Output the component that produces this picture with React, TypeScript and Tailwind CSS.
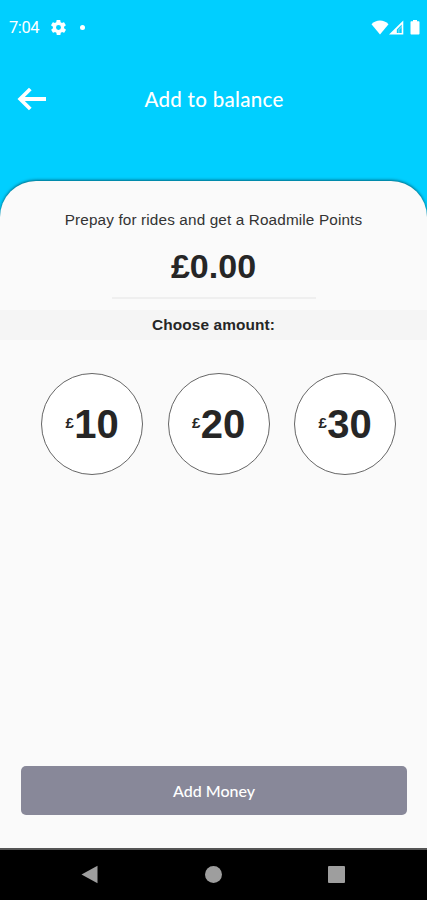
import React, { useState } from 'react';

const amounts = [10, 20, 30];

const StatusBar: React.FC = () => (
  <div className="flex h-[54px] items-center justify-between pl-[9px] pr-[7px] text-white">
    <div className="flex items-center">
      <span className="w-[42px] pt-[2px] font-[Roboto,sans-serif] text-[16.5px] leading-none tracking-[-0.4px]">7:04</span>
      <svg className="h-[15px] w-[15px]" viewBox="2 2 20 20" fill="currentColor">
        <path
          fillRule="evenodd"
          d="M19.4 13a7.5 7.5 0 0 0 0-2l2.1-1.6a.5.5 0 0 0 .1-.7l-2-3.4a.5.5 0 0 0-.6-.2l-2.5 1a7.3 7.3 0 0 0-1.7-1l-.4-2.7a.5.5 0 0 0-.5-.4h-4a.5.5 0 0 0-.5.4l-.4 2.7a7.3 7.3 0 0 0-1.7 1l-2.5-1a.5.5 0 0 0-.6.2l-2 3.4a.5.5 0 0 0 .1.7L4.6 11a7.5 7.5 0 0 0 0 2l-2.1 1.6a.5.5 0 0 0-.1.7l2 3.4c.1.2.4.3.6.2l2.5-1c.5.4 1.1.7 1.7 1l.4 2.7c0 .2.2.4.5.4h4c.2 0 .5-.2.5-.4l.4-2.7c.6-.3 1.2-.6 1.7-1l2.5 1c.2.1.5 0 .6-.2l2-3.4a.5.5 0 0 0-.1-.7zM12 15.300a3.300 3.300 0 1 1 0-6.600 3.300 3.300 0 0 1 0 6.600z"
        />
      </svg>
      <span className="ml-[14px] h-[5px] w-[5px] rounded-full bg-white" />
    </div>
    <div className="flex items-center">
      <svg className="h-[15px] w-[18px]" viewBox="0 0 18 15" fill="currentColor">
        <path d="M.5 4.200C5-.6 13-.6 17.500 4.200L9 14.500z" />
      </svg>
      <svg className="h-[15px] w-[15px]" viewBox="0 0 15 15" fill="currentColor">
        <path fillRule="evenodd" d="M14.300.5v14H0zM12.700 4.600L7.800 9.400v3.500h4.900z" />
        <path d="M9 9.500l3.700-4v2L10.500 10v3H9z" opacity="0.3" />
      </svg>
      <svg className="ml-[6px] h-[15px] w-[10px]" viewBox="0 0 10 15" fill="currentColor">
        <path d="M3 0h4v1.200h1.500c.6 0 1 .4 1 1v11.300c0 .6-.4 1-1 1h-7c-.6 0-1-.4-1-1V2.200c0-.6.4-1 1-1H3z" />
      </svg>
    </div>
  </div>
);

const NavigationBar: React.FC = () => (
  <div className="flex h-[52px] items-center justify-between border-t-2 border-[#555] bg-black pb-[2px] pl-[81px] pr-[82px]">
    <svg className="h-[19px] w-[17px]" viewBox="0 0 17 19" fill="#9e9e9e">
      <path d="M16.500.8v17.400L.5 9.500z" />
    </svg>
    <span className="h-[17px] w-[17px] rounded-full bg-[#9e9e9e]" />
    <span className="h-[17px] w-[17px] rounded-[1px] bg-[#9e9e9e]" />
  </div>
);

const App: React.FC = () => {
  const [selected, setSelected] = useState<number | null>(null);

  return (
    <div className="flex h-[900px] w-[427px] flex-col overflow-hidden bg-[#00cfff] font-['Liberation_Sans',Arial,sans-serif] text-[#262626]">
      <StatusBar />

      <header className="grid h-[127px] grid-cols-[64px_1fr_64px] items-start pt-[32px] text-white">
        <button className="pl-[17px] pt-px" aria-label="Back">
          <svg className="h-[24px] w-[30px]" viewBox="0 0 30 24" fill="none" stroke="currentColor" strokeWidth="3.8">
            <path d="M13.300 2L3.200 12l10.100 10M3 12h26" />
          </svg>
        </button>
        <h1 className="pl-px pt-px text-center font-[Lato,sans-serif] text-[20.5px] font-medium leading-[24px] tracking-[0.3px]">
          Add to balance
        </h1>
      </header>

      <main className="flex flex-1 flex-col rounded-t-[36px] bg-[#fafafa] shadow-[0_-1px_3px_rgba(0,0,0,0.5)]">
        <p className="pt-[29px] text-center text-[15.3px] leading-[20px] tracking-[0.14px] text-[#333]">
          Prepay for rides and get a Roadmile Points
        </p>
        <div className="mx-auto mt-[13px] h-[56px] w-[204px] border-b-2 border-[#efefef] text-center text-[34px] font-bold leading-[46px]">
          £0.00
        </div>
        <h2 className="mt-[11px] h-[30px] bg-[#f5f5f5] text-center text-[15.4px] font-bold leading-[29px] tracking-[0.1px]">
          Choose amount:
        </h2>

        <div className="mt-[33px] flex gap-[24.5px] pl-[41px]">
          {amounts.map((amount) => (
            <button
              key={amount}
              onClick={() => setSelected(amount)}
              aria-pressed={selected === amount}
              className="flex h-[102px] w-[102px] items-center justify-center rounded-full border border-[#666] bg-white pb-px font-bold"
            >
              <span className="w-[9px] text-[15px]">£</span>
              <span className="text-[40px] leading-none">{amount}</span>
            </button>
          ))}
        </div>

        <button className="mb-[33px] ml-[21px] mr-[20px] mt-auto h-[49px] rounded-[5px] bg-[#888899] font-[Lato,sans-serif] text-[16px] font-medium text-white">
          Add Money
        </button>
      </main>

      <NavigationBar />
    </div>
  );
};

export default App;
